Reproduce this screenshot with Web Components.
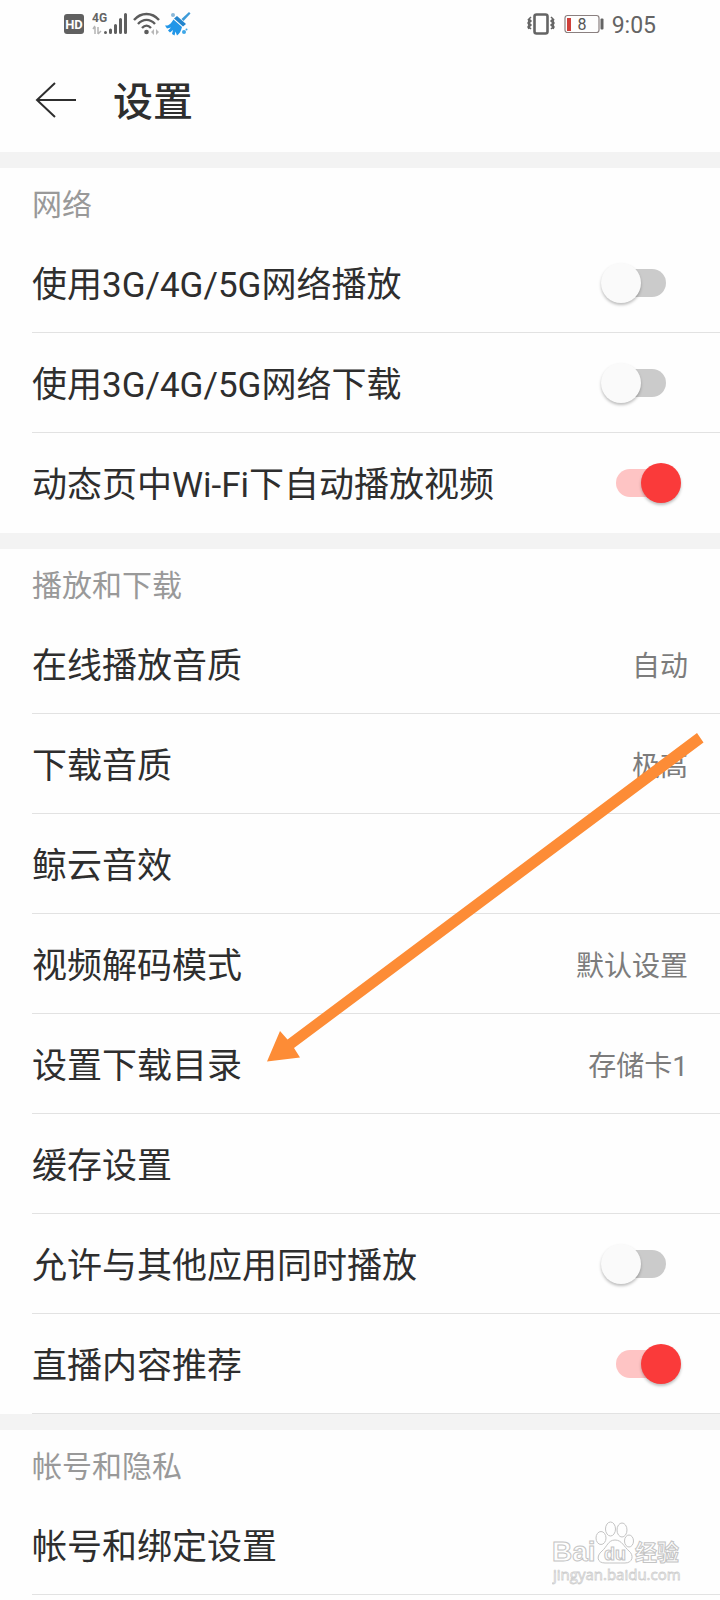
<!DOCTYPE html>
<html lang="zh-CN">
<head>
<meta charset="UTF-8">
<meta name="viewport" content="width=device-width, initial-scale=1">
<title>设置</title>
<style>
  body {
    margin: 0;
    background: #fefefe;
    color: #2e2e2e;
    font-family: Roboto, "Noto Sans CJK SC", sans-serif;
  }
</style>
</head>
<body>
<settings-page>
  <status-bar time="9:05" battery="8"></status-bar>
  <page-header heading="设置"></page-header>
  <settings-group heading="网络">
    <setting-toggle label="使用3G/4G/5G网络播放"></setting-toggle>
    <setting-toggle label="使用3G/4G/5G网络下载"></setting-toggle>
    <setting-toggle label="动态页中Wi-Fi下自动播放视频" checked plain></setting-toggle>
  </settings-group>
  <settings-group heading="播放和下载">
    <setting-item label="在线播放音质" value="自动"></setting-item>
    <setting-item label="下载音质" value="极高"></setting-item>
    <setting-item label="鲸云音效"></setting-item>
    <setting-item label="视频解码模式" value="默认设置"></setting-item>
    <setting-item label="设置下载目录" value="存储卡1"></setting-item>
    <setting-item label="缓存设置"></setting-item>
    <setting-toggle label="允许与其他应用同时播放"></setting-toggle>
    <setting-toggle label="直播内容推荐" checked></setting-toggle>
  </settings-group>
  <settings-group heading="帐号和隐私">
    <setting-item label="帐号和绑定设置"></setting-item>
  </settings-group>
  <pointer-arrow slot="overlay"></pointer-arrow>
  <site-watermark slot="overlay"></site-watermark>
</settings-page>

<script>
// 页面容器：正文按顺序排列，overlay 插槽盖在正文上方
class SettingsPage extends HTMLElement {
  constructor() {
    super();
    this.attachShadow({ mode: 'open' });
    this.shadowRoot.innerHTML = `
      <style>
        :host {
          display: block;
          position: relative;
          min-height: 100vh;
          overflow: hidden;
        }
        main {
          display: flex;
          flex-direction: column;
        }
      </style>
      <main><slot></slot></main>
      <slot name="overlay"></slot>
    `;
  }
}

// 系统状态栏
class StatusBar extends HTMLElement {
  constructor() {
    super();
    this.attachShadow({ mode: 'open' });
    this.render();
  }

  render() {
    const time = this.getAttribute('time') || '';
    const battery = this.getAttribute('battery') || '';

    this.shadowRoot.innerHTML = `
      <style>
        :host {
          display: flex;
          align-items: center;
          justify-content: space-between;
          height: 48px;
          padding: 0 64px;
          color: #646464;
        }
        .side {
          display: flex;
          align-items: center;
          gap: 8px;
        }
        .signals {
          gap: 4px;
        }
        .time {
          padding-top: 4px;
          font-size: 23px;
          line-height: 24px;
        }
        svg {
          display: block;
        }
        text {
          font-family: Roboto, sans-serif;
        }
      </style>
      <div class="side signals">
        <svg width="24" height="22" viewBox="0 0 24 22">
          <rect x="0" y="1" width="20" height="20" rx="3" fill="#606060"/>
          <text x="10" y="16" font-size="13" font-weight="700" text-anchor="middle" fill="#fff">HD</text>
        </svg>
        <svg width="36" height="24" viewBox="0 0 36 24">
          <text x="0" y="10" font-size="12" font-weight="700" fill="#646464">4G</text>
          <path d="M3 22v-7M1 17l2-3M6 15v7M6 22l3-3" stroke="#b4b4b4" stroke-width="1.5" fill="none"/>
          <g stroke="#5f5f5f" stroke-width="3" stroke-linecap="round">
            <path d="M13.500 20.500v0M18.500 18v2.500M23.500 13.500v7M28.500 7.500v13M33.500 2.500v18"/>
          </g>
        </svg>
        <svg width="28" height="24" viewBox="-1 0 28 24">
          <g fill="none" stroke="#5c5c5c" stroke-width="2.400">
            <path d="M1 8C8 0 19 0 26 8"/>
            <path d="M5 12c5-5.500 12-5.500 17 0"/>
            <path d="M9 16c3-3.200 6-3.200 9 0"/>
          </g>
          <circle cx="13.500" cy="20" r="2.300" fill="#5c5c5c"/>
          <path d="M21 17v6l-3-3zM23 17l3 3-3 3z" fill="#b8b8b8"/>
        </svg>
        <svg width="28" height="26" viewBox="-1 0 28 26">
          <path d="M24 1l1.500 1.500-7 7.500-2-2z" fill="#3d9bd8"/>
          <path d="M12 5l9 8-3 2.500-9-8z" fill="#2385cd"/>
          <path d="M8.500 8.500l8.500 7.500c-1 4-2.500 7-5 8.500l-1.500-4-1 4-2.500-1.500 1-4-3 2.500-2-2 3-3-4 1-2-3c4 .500 6-2 8.500-6z" fill="#2196e8"/>
          <circle cx="8" cy="4" r="2" fill="#8ab8d8"/>
          <circle cx="19" cy="21" r="2" fill="#3ea7e8"/>
          <circle cx="21.500" cy="18.500" r="1" fill="#3ea7e8"/>
        </svg>
      </div>
      <div class="side">
        <svg width="30" height="24" viewBox="0 0 30 24">
          <rect x="8.500" y="2.500" width="13" height="19" rx="2" fill="none" stroke="#646464" stroke-width="2.600"/>
          <path d="M5 5l-2 2 2 2-2 2 2 2-2 2 2 2M2 7l1 2-1 2 1 2-1 2 1 2M25 5l2 2-2 2 2 2-2 2 2 2-2 2M28 7l-1 2 1 2-1 2 1 2-1 2" fill="none" stroke="#646464" stroke-width="1.500"/>
        </svg>
        <svg width="40" height="24" viewBox="0 0 40 24">
          <rect x="1" y="3.500" width="34" height="17" rx="2.500" fill="none" stroke="#8a8080" stroke-width="1.200"/>
          <rect x="3" y="6" width="4" height="13" fill="#cf3f3a"/>
          <text x="18" y="18" font-size="16" text-anchor="middle" fill="#555">${battery}</text>
          <rect x="36.500" y="6.500" width="3" height="11" rx="1" fill="#646464"/>
        </svg>
        <span class="time">${time}</span>
      </div>
    `;
  }
}

// 标题栏，带返回按钮
class PageHeader extends HTMLElement {
  constructor() {
    super();
    this.attachShadow({ mode: 'open' });
    const heading = this.getAttribute('heading') || '';
    this.shadowRoot.innerHTML = `
      <style>
        :host {
          display: flex;
          align-items: center;
          gap: 37px;
          height: 104px;
          padding: 0 32px;
        }
        button {
          display: block;
          padding: 0;
          border: 0;
          background: none;
          color: inherit;
          cursor: pointer;
        }
        svg {
          display: block;
        }
        h1 {
          margin: 0;
          padding-top: 6px;
          font-size: 40px;
          font-weight: 500;
          line-height: 48px;
        }
      </style>
      <button type="button" aria-label="返回">
        <svg width="44" height="40" viewBox="0 0 44 40">
          <path d="M23 3L5 20l18 17M5 20h39" fill="none" stroke="currentColor" stroke-width="2"/>
        </svg>
      </button>
      <h1>${heading}</h1>
    `;
  }
}

// 设置分组，上方有灰色分隔带
class SettingsGroup extends HTMLElement {
  constructor() {
    super();
    this.attachShadow({ mode: 'open' });
    const heading = this.getAttribute('heading') || '';
    this.shadowRoot.innerHTML = `
      <style>
        :host {
          display: block;
          border-top: 16px solid #f3f3f3;
        }
        h2 {
          box-sizing: border-box;
          height: 65px;
          margin: 0;
          padding: 15px 32px 0;
          font-size: 30px;
          font-weight: 400;
          line-height: 44px;
          color: #999;
        }
      </style>
      <section>
        <h2>${heading}</h2>
        <slot></slot>
      </section>
    `;
  }
}

// 两种设置行共用的样式
const rowStyles = `
  :host {
    display: block;
    padding-left: 32px;
  }
  .row {
    display: flex;
    align-items: center;
    justify-content: space-between;
    box-sizing: border-box;
    width: 100%;
    height: 100px;
    margin: 0;
    padding: 0 32px 0 0;
    border: 0;
    border-bottom: 1px solid #e2e2e2;
    background: none;
    color: inherit;
    font: inherit;
    font-size: 35px;
    line-height: 48px;
    text-align: left;
    cursor: pointer;
  }
  .row span {
    padding-top: 6px;
  }
  :host([plain]) .row {
    border-bottom-color: transparent;
  }
`;

// 可点击的设置行，右侧显示当前值
class SettingItem extends HTMLElement {
  constructor() {
    super();
    this.attachShadow({ mode: 'open' });
    const label = this.getAttribute('label') || '';
    const value = this.getAttribute('value') || '';
    this.shadowRoot.innerHTML = `
      <style>
        ${rowStyles}
        .value {
          font-size: 28px;
          color: #7c7c7c;
        }
      </style>
      <button type="button" class="row">
        <span>${label}</span>
        ${value ? `<span class="value">${value}</span>` : ''}
      </button>
    `;
  }
}

// 带开关的设置行
class SettingToggle extends HTMLElement {
  constructor() {
    super();
    this.attachShadow({ mode: 'open' });
    const label = this.getAttribute('label') || '';
    const checked = this.hasAttribute('checked') ? 'checked' : '';
    this.shadowRoot.innerHTML = `
      <style>
        ${rowStyles}
        .row {
          padding-right: 39px;
        }
        input {
          appearance: none;
          display: grid;
          align-items: center;
          flex: none;
          width: 80px;
          height: 40px;
          margin: 0;
          cursor: pointer;
        }
        input::before,
        input::after {
          content: "";
          grid-area: 1 / 1;
        }
        input::before {
          justify-self: center;
          width: 50px;
          height: 28px;
          border-radius: 14px;
          background: #cbcbcb;
        }
        input::after {
          justify-self: start;
          width: 40px;
          height: 40px;
          border-radius: 50%;
          background: #fafafa;
          box-shadow: 0 2px 3px rgba(0, 0, 0, 0.25);
        }
        input:checked::before {
          background: #fec4c4;
        }
        input:checked::after {
          justify-self: end;
          background: #fa3a3a;
        }
      </style>
      <label class="row" for="switch">
        <span>${label}</span>
        <input type="checkbox" id="switch" ${checked}>
      </label>
    `;
  }
}

// 指向“设置下载目录”的箭头标注
class PointerArrow extends HTMLElement {
  constructor() {
    super();
    this.attachShadow({ mode: 'open' });
    this.shadowRoot.innerHTML = `
      <style>
        :host {
          position: absolute;
          top: 732px;
          left: 264px;
          pointer-events: none;
        }
        svg {
          display: block;
        }
      </style>
      <svg width="440" height="332" viewBox="264 732 440 332">
        <path d="M267 1061.500L280 1031l7.500 8.500L697 733l6.500 9.500L294 1048l6 9.500z" fill="#fd8c36"/>
      </svg>
    `;
  }
}

// 右下角水印
class SiteWatermark extends HTMLElement {
  constructor() {
    super();
    this.attachShadow({ mode: 'open' });
    this.shadowRoot.innerHTML = `
      <style>
        :host {
          position: absolute;
          right: 36px;
          top: 1518px;
          pointer-events: none;
        }
        svg {
          display: block;
        }
        text {
          font-family: "Liberation Sans", "Noto Sans CJK SC", sans-serif;
        }
        .site {
          font-family: "Open Sans", sans-serif;
        }
      </style>
      <svg width="132" height="68" viewBox="0 0 132 68">
        <g fill="#fefefe" stroke="#c4c4c4" stroke-width="1">
          <text x="0" y="43" font-size="28" font-weight="700">Bai</text>
          <ellipse cx="49" cy="20" rx="5" ry="6.500"/>
          <ellipse cx="58.500" cy="11" rx="5" ry="7"/>
          <ellipse cx="70" cy="12" rx="5" ry="7"/>
          <ellipse cx="77" cy="23" rx="4.500" ry="6"/>
          <path d="M63 22c-7 0-8 7-13 11-6 5-5 12 3 12 6 0 14 0 20 0 8 0 9-8 4-12-5-4-7-11-14-11z"/>
          <text x="52" y="42" font-size="18" font-weight="700">du</text>
          <text x="83" y="42" font-size="22" font-weight="700">经验</text>
        </g>
        <text class="site" x="1" y="62" font-size="15" fill="#fff" stroke="#cfcfcf" stroke-width="0.800">jingyan.baidu.com</text>
      </svg>
    `;
  }
}

// 注册自定义元素
customElements.define('settings-page', SettingsPage);
customElements.define('status-bar', StatusBar);
customElements.define('page-header', PageHeader);
customElements.define('settings-group', SettingsGroup);
customElements.define('setting-item', SettingItem);
customElements.define('setting-toggle', SettingToggle);
customElements.define('pointer-arrow', PointerArrow);
customElements.define('site-watermark', SiteWatermark);
</script>
</body>
</html>
